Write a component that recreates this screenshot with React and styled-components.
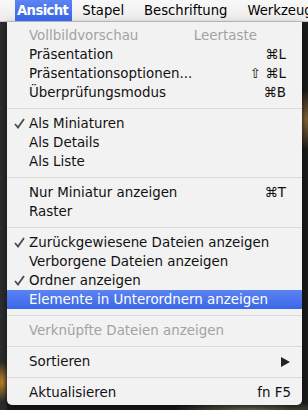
import React from "react";
import styled, { createGlobalStyle } from "styled-components";

const GlobalStyle = createGlobalStyle`
  html, body { margin: 0; padding: 0; background: #1f1f1f; }
  body { font-family: "DejaVu Sans", "Liberation Sans", sans-serif; }
`;

const Screen = styled.div`
  width: 308px;
  height: 410px;
  overflow: hidden;
  background:
    radial-gradient(ellipse 10px 30px at 306px 120px, #8a6a3a, transparent),
    radial-gradient(ellipse 8px 20px at 2px 382px, #c88a2a, transparent),
    radial-gradient(ellipse 80px 10px at 250px 410px, #7d7a66, transparent),
    linear-gradient(to right, #2e2e2e 0, #2a2a2a 7px, #1c1c1c 7px);
`;

const MenuBar = styled.div`
  height: 21px;
  display: flex;
  align-items: stretch;
  padding-left: 15px;
  background: linear-gradient(to bottom, #f8f8f8, #ececec);
  border-bottom: 1px solid #c4c4c4;
  font-size: 13.2px;
  white-space: nowrap;
`;

const Title = styled.div`
  display: flex;
  align-items: center;
  padding: ${(p) => (p.$active ? "0 4px 0 2px" : "0 10px")};
  color: ${(p) => (p.$active ? "#fff" : "#000")};
  font-weight: ${(p) => (p.$active ? 700 : 400)};
  letter-spacing: ${(p) => (p.$active ? "-0.6px" : "0")};
  background: ${(p) =>
    p.$active ? "linear-gradient(to bottom, #5c84f3, #3763e6)" : "transparent"};
`;

const Menu = styled.div`
  margin-left: 7px;
  width: 295px;
  padding: 4px 0 3px;
  background: rgba(247, 247, 247, 0.98);
  border-radius: 0 0 5px 5px;
  box-shadow: 0 4px 10px rgba(0, 0, 0, 0.5);
  font-size: 13.4px;
`;

const Row = styled.div`
  height: 19px;
  display: grid;
  grid-template-columns: 22px 1fr auto;
  align-items: center;
  padding-right: 16px;
  white-space: nowrap;
  color: ${(p) => (p.$highlight ? "#fff" : p.$disabled ? "#a2a2a2" : "#111")};
  background: ${(p) =>
    p.$highlight ? "linear-gradient(to bottom, #5b83f2, #3b66e8)" : "transparent"};
`;

const CheckCell = styled.div`
  display: flex;
  align-items: center;
  padding-left: 7px;
`;

const Label = styled.span`
  line-height: 19px;
`;

const Trail = styled.span`
  margin-right: ${(p) => p.$offset || 0}px;
  display: flex;
  align-items: center;
`;

const Separator = styled.div`
  height: 12px;
  display: flex;
  align-items: center;
  &::after {
    content: "";
    flex: 1;
    height: 1px;
    background: #dadada;
  }
`;

const Check = () => (
  <svg width="11" height="11" viewBox="0 0 11 11">
    <path d="M1 6 L4 9.5 L10 1" fill="none" stroke="#4a4a4a" strokeWidth="1.8" />
  </svg>
);

const Arrow = () => (
  <svg width="9" height="10" viewBox="0 0 9 10">
    <polygon points="0,0 9,5 0,10" fill="#222" />
  </svg>
);

const Item = ({ label, shortcut, checked, disabled, highlight, offset, submenu }) => (
  <Row $disabled={disabled} $highlight={highlight}>
    <CheckCell>{checked && <Check />}</CheckCell>
    <Label>{label}</Label>
    <Trail $offset={offset}>{submenu ? <Arrow /> : shortcut}</Trail>
  </Row>
);

export default function App() {
  return (
    <>
      <GlobalStyle />
      <Screen>
        <MenuBar>
          <Title $active>Ansicht</Title>
          <Title>Stapel</Title>
          <Title>Beschriftung</Title>
          <Title>Werkzeuge</Title>
        </MenuBar>
        <Menu>
          <Item label="Vollbildvorschau" shortcut="Leertaste" disabled offset={29} />
          <Item label="Präsentation" shortcut="⌘L" />
          <Item label="Präsentationsoptionen..." shortcut="⇧ ⌘L" />
          <Item label="Überprüfungsmodus" shortcut="⌘B" />
          <Separator />
          <Item label="Als Miniaturen" checked />
          <Item label="Als Details" />
          <Item label="Als Liste" />
          <Separator />
          <Item label="Nur Miniatur anzeigen" shortcut="⌘T" />
          <Item label="Raster" />
          <Separator />
          <Item label="Zurückgewiesene Dateien anzeigen" checked />
          <Item label="Verborgene Dateien anzeigen" />
          <Item label="Ordner anzeigen" checked />
          <Item label="Elemente in Unterordnern anzeigen" highlight />
          <Separator />
          <Item label="Verknüpfte Dateien anzeigen" disabled />
          <Separator />
          <Item label="Sortieren" submenu offset={-4} />
          <Separator />
          <Item label="Aktualisieren" shortcut="fn F5" offset={-5} />
        </Menu>
      </Screen>
    </>
  );
}
